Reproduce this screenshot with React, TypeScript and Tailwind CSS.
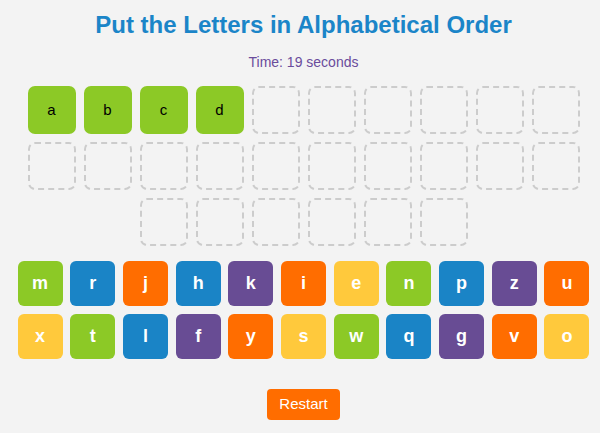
import React from 'react';

type Tile = { letter: string; color: string };

const GREEN = 'bg-[#8cc926]';
const BLUE = 'bg-[#1a84c6]';
const ORANGE = 'bg-[#ff6d00]';
const PURPLE = 'bg-[#684c94]';
const YELLOW = 'bg-[#ffc93c]';

const tiles: Tile[] = [
  { letter: 'm', color: GREEN },
  { letter: 'r', color: BLUE },
  { letter: 'j', color: ORANGE },
  { letter: 'h', color: BLUE },
  { letter: 'k', color: PURPLE },
  { letter: 'i', color: ORANGE },
  { letter: 'e', color: YELLOW },
  { letter: 'n', color: GREEN },
  { letter: 'p', color: BLUE },
  { letter: 'z', color: PURPLE },
  { letter: 'u', color: ORANGE },
  { letter: 'x', color: YELLOW },
  { letter: 't', color: GREEN },
  { letter: 'l', color: BLUE },
  { letter: 'f', color: PURPLE },
  { letter: 'y', color: ORANGE },
  { letter: 's', color: YELLOW },
  { letter: 'w', color: GREEN },
  { letter: 'q', color: BLUE },
  { letter: 'g', color: PURPLE },
  { letter: 'v', color: ORANGE },
  { letter: 'o', color: YELLOW },
];

// 26 slots, first four already filled
const placed = ['a', 'b', 'c', 'd'];
const slots: (string | null)[] = Array.from({ length: 26 }, (_, i) => placed[i] ?? null);

const App: React.FC = () => {
  return (
    <div className="min-h-screen bg-[#f3f3f3] pl-[7px] font-['Liberation_Sans',Arial,sans-serif]">
      <h1 className="pt-[11px] text-center text-[24px] font-bold leading-[28px] text-[#1b85c8]">
        Put the Letters in Alphabetical Order
      </h1>
      <p className="mt-[15px] text-center text-[14px] leading-[16px] text-[#6a4c9c]">Time: 19 seconds</p>

      <div className="mx-auto mt-[16px] flex w-[552px] flex-wrap justify-center gap-2">
        {slots.map((s, i) =>
          s ? (
            <div
              key={i}
              className="flex h-12 w-12 items-center justify-center rounded-[7px] bg-[#8cc926] text-[15px] text-black"
            >
              {s}
            </div>
          ) : (
            <div key={i} className="h-12 w-12 rounded-[7px] border-2 border-dashed border-[#cccccc]" />
          )
        )}
      </div>

      <div className="mt-[15px] grid grid-cols-[repeat(11,45px)] justify-center gap-x-[7.7px] gap-y-2">
        {tiles.map((t) => (
          <div
            key={t.letter}
            className={`flex h-[45px] w-[45px] items-center justify-center rounded-[6px] text-[18px] font-bold text-white ${t.color}`}
          >
            {t.letter}
          </div>
        ))}
      </div>

      <div className="mt-[30px] flex justify-center">
        <button className="h-[31px] w-[73px] rounded-[4px] bg-[#ff6d00] text-[15px] text-white">Restart</button>
      </div>
    </div>
  );
};

export default App;
